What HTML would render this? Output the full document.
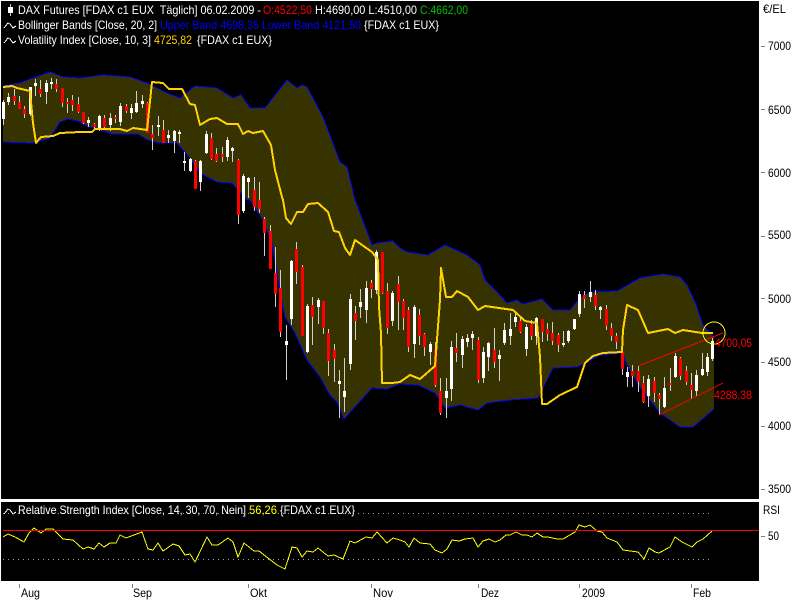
<!DOCTYPE html>
<html><head><meta charset="utf-8"><title>DAX Futures</title>
<style>
html,body{margin:0;padding:0;background:#fff;width:800px;height:600px;overflow:hidden}
svg{display:block;position:absolute;left:0;top:0}
text{font-family:"Liberation Sans",sans-serif;font-size:12px;white-space:pre}
</style></head><body>
<svg width="800" height="600" viewBox="0 0 800 600" xmlns="http://www.w3.org/2000/svg">
<rect width="800" height="600" fill="#fff"/>
<rect x="1" y="1" width="758" height="498" fill="#000"/>
<rect x="1" y="502" width="758" height="79" fill="#000"/>

<!-- band fill -->
<path fill="#373300" shape-rendering="crispEdges" d="M3,86 20,83 33,78 50,72 63,77 80,78 103,75 130,77 147,83 167,93 180,98 195,86 217,88 233,98 241,95 250,108 265,108 287,80 297,88 302,85 307,87 323,117 340,162 347,167 355,200 372,245 377,243 393,241 400,248 407,252 428,255 445,245 467,255 480,265 485,280 495,290 507,303 517,300 523,304 542,299 553,310 570,310 580,298 590,292 617,291 640,278 663,274 680,277 687,285 695,302 703,325 714,337 714,409 693,427 680,427 660,413 640,387 627,365 622,353 600,355 587,362 577,367 553,368 547,380 538,398 510,400 487,403 478,410 460,405 445,408 435,393 418,385 400,384 387,389 372,388 344,419 337,402 330,395 320,377 307,360 295,333 285,317 277,273 272,243 263,220 250,200 247,200 232,183 217,182 200,173 190,158 177,143 160,143 148,140 138,134 113,134 100,130 87,126 78,121 68,119 60,122 50,138 33,143 3,142Z"/>
<!-- bands -->
<g fill="none" stroke="#0000ff" stroke-width="1" shape-rendering="crispEdges">
<polyline points="3,86 20,83 33,78 50,72 63,77 80,78 103,75 130,77 147,83 167,93 180,98 195,86 217,88 233,98 241,95 250,108 265,108 287,80 297,88 302,85 307,87 323,117 340,162 347,167 355,200 372,245 377,243 393,241 400,248 407,252 428,255 445,245 467,255 480,265 485,280 495,290 507,303 517,300 523,304 542,299 553,310 570,310 580,298 590,292 617,291 640,278 663,274 680,277 687,285 695,302 703,325 714,337"/>
<polyline points="3,142 33,143 50,138 60,122 68,119 78,121 87,126 100,130 113,134 138,134 148,140 160,143 177,143 190,158 200,173 217,182 232,183 247,200 250,200 263,220 272,243 277,273 285,317 295,333 307,360 320,377 330,395 337,402 344,419 372,388 387,389 400,384 418,385 435,393 445,408 460,405 478,410 487,403 510,400 538,398 547,380 553,368 577,367 587,362 600,355 622,353 627,365 640,387 660,413 680,427 693,427 714,409"/>
</g>

<!-- wicks -->
<path fill="none" stroke="#d0d0d0" stroke-width="1" shape-rendering="crispEdges" d="M3.5,100V125M8.5,93V105M14.5,89V105M19.5,96V109M24.5,106V118M30.5,87V116M35.5,79V96M40.5,80V97M46.5,80V104M51.5,78V89M56.5,79V92M62.5,88V107M67.5,98V113M72.5,95V111M78.5,97V113M83.5,112V124M88.5,117V127M94.5,123V130M99.5,115V131M104.5,115V128M110.5,113V131M115.5,115V123M120.5,103V126M126.5,104V113M131.5,104V119M136.5,91V113M142.5,95V108M147.5,102V133M152.5,125V150M158.5,116V136M163.5,120V143M168.5,130V143M174.5,130V153M179.5,130V143M184.5,152V171M190.5,158V172M195.5,160V189M200.5,160V191M206.5,131V154M211.5,133V160M216.5,148V162M222.5,147V162M227.5,137V161M232.5,147V162M238.5,159V224M243.5,174V213M248.5,177V198M254.5,177V211M259.5,182V213M264.5,217V256M270.5,225V269M275.5,247V307M280.5,270V337M286.5,325V380M291.5,260V325M296.5,242V284M302.5,265V336M307.5,304V353M312.5,297V345M318.5,298V324M323.5,301V334M328.5,329V376M334.5,344V382M339.5,370V418M344.5,358V412M350.5,294V370M355.5,306V340M360.5,289V318M366.5,281V323M371.5,280V298M376.5,250V294M382.5,252V294M387.5,283V334M392.5,291V326M398.5,276V330M403.5,299V330M408.5,307V352M414.5,305V358M419.5,309V345M424.5,333V356M430.5,342V365M435.5,342V387M440.5,378V415M446.5,378V418M451.5,341V401M456.5,333V362M462.5,336V368M467.5,334V347M472.5,331V350M478.5,337V383M483.5,347V383M488.5,342V371M494.5,328V368M499.5,350V381M504.5,323V345M510.5,313V345M515.5,313V327M520.5,317V333M526.5,324V356M531.5,320V340M536.5,317V345M542.5,319V342M547.5,323V341M552.5,322V345M558.5,333V352M563.5,331V347M568.5,330V343M574.5,319V330M579.5,291V317M584.5,291V308M590.5,281V302M595.5,290V310M600.5,306V319M606.5,305V330M611.5,323V341M616.5,333V349M622.5,337V375M627.5,367V387M632.5,365V387M638.5,366V392M643.5,376V403M648.5,375V407M654.5,377V402M659.5,393V415M664.5,377V408M670.5,368V391M675.5,353V378M680.5,357V380M686.5,366V385M691.5,373V399M696.5,370V396M702.5,353V376M707.5,353V376M712.5,338V361"/>
<!-- white bodies -->
<path fill="none" stroke="#fff" stroke-width="3" shape-rendering="crispEdges" d="M3.5,102V119M8.5,97V102M30.5,87V114M35.5,83V86M46.5,83V92M51.5,82V84M88.5,120V123M99.5,116V128M110.5,118V125M120.5,106V122M131.5,108V113M136.5,103V112M142.5,101V104M158.5,125V127M168.5,135V138M174.5,131V141M179.5,132V134M184.5,161V163M190.5,159V171M200.5,161V182M206.5,134V153M227.5,140V157M232.5,148V151M243.5,176V211M248.5,178V182M286.5,341V345M291.5,261V319M307.5,306V352M318.5,300V307M339.5,381V384M344.5,391V397M350.5,299V364M360.5,302V307M366.5,288V310M376.5,252V290M392.5,293V321M414.5,307V344M430.5,344V352M446.5,391V398M451.5,347V389M462.5,339V355M467.5,338V342M472.5,334V338M483.5,352V378M488.5,343V357M499.5,355V359M504.5,330V343M510.5,329V336M515.5,317V322M526.5,327V349M536.5,318V336M563.5,343V345M568.5,331V341M574.5,319V329M579.5,294V314M590.5,292V297M600.5,307V310M627.5,372V377M648.5,379V396M664.5,388V407M675.5,356V377M696.5,375V391M702.5,369V375M707.5,357V372M712.5,341V359"/>
<!-- red bodies -->
<path fill="none" stroke="#ff0000" stroke-width="3" shape-rendering="crispEdges" d="M14.5,96V101M19.5,102V109M24.5,109V114M40.5,89V94M56.5,84V89M62.5,88V103M67.5,102V104M72.5,100V105M78.5,104V112M83.5,112V123M94.5,124V127M104.5,118V127M115.5,117V119M126.5,106V111M147.5,103V133M152.5,134V138M163.5,130V143M195.5,161V189M211.5,138V159M216.5,154V161M222.5,154V157M238.5,160V215M254.5,190V207M259.5,200V209M264.5,219V233M270.5,231V269M275.5,273V294M280.5,288V332M296.5,249V272M302.5,267V336M312.5,305V317M323.5,301V328M328.5,333V361M334.5,350V359M355.5,313V321M371.5,283V289M382.5,252V293M387.5,291V328M398.5,284V302M403.5,301V318M408.5,310V347M419.5,315V336M424.5,334V347M435.5,349V385M440.5,391V413M456.5,348V353M478.5,340V380M494.5,350V362M520.5,321V332M531.5,324V336M542.5,319V332M547.5,329V334M552.5,333V341M558.5,335V345M584.5,295V299M595.5,295V306M606.5,309V326M611.5,328V336M616.5,336V342M622.5,352V369M632.5,371V376M638.5,371V382M643.5,383V402M654.5,381V393M659.5,395V399M670.5,383V385M680.5,358V376M686.5,371V382M691.5,385V390"/>

<!-- volatility line -->
<polyline fill="none" stroke="#ffd200" stroke-width="2" stroke-linejoin="round" shape-rendering="crispEdges" points="3,87 12,86 17,88 30,91 33,123 36,143 41,137 53,136 60,133 80,132 92,132 95,129 120,129 127,131 133,128 147,130 152,82 163,83 169,89 182,89 190,104 195,105 200,125 210,119 217,118 227,124 238,124 243,134 248,131 253,133 263,131 271,145 275,170 282,197 283,200 286,218 291,224 297,212 303,212 308,204 318,203 328,212 334,231 339,232 345,248 350,255 355,240 372,252 378,260 379,307 381,333 382,383 392,383 400,382 410,375 420,379 435,366 440,300 441,268 446,297 452,297 457,291 468,297 478,310 485,306 513,310 525,321 537,323 540,357 542,404 547,404 560,395 577,387 585,363 593,356 603,353 622,352 623,330 627,305 638,310 648,333 668,329 675,333 683,330 702,333 713,333"/>

<!-- channel -->
<g fill="none" stroke="#ff0000" stroke-width="1" shape-rendering="crispEdges">
<line x1="638" y1="366" x2="723" y2="333"/>
<line x1="659" y1="415" x2="723" y2="383"/>
</g>
<circle cx="714" cy="333" r="11" fill="none" stroke="#ffff00" stroke-width="1" shape-rendering="crispEdges"/>
<text x="715" y="347" fill="#ff0000" textLength="37" lengthAdjust="spacingAndGlyphs">4700,05</text>
<text x="714" y="399" fill="#ff0000" textLength="38" lengthAdjust="spacingAndGlyphs">4288,38</text>

<!-- legend icons -->
<path d="M10.5,4V16" stroke="#ccc" stroke-width="1" shape-rendering="crispEdges"/>
<rect x="8" y="7" width="5" height="6" fill="#fff"/>
<g fill="none" stroke="#fff" stroke-width="1" shape-rendering="crispEdges">
<path d="M4,28 8,23 10,24 13,28 16,26"/>
<path d="M4,43 8,38 10,39 13,43 16,41"/>
<path d="M4,514 8,509 10,510 13,514 16,512"/>
</g>

<!-- legend text -->
<text x="18" y="14" fill="#fff" textLength="243" lengthAdjust="spacingAndGlyphs">DAX Futures [FDAX c1 EUX  Täglich] 06.02.2009 -</text>
<text x="263" y="14" fill="#ff0000" textLength="49" lengthAdjust="spacingAndGlyphs">O:4522,50</text>
<text x="315" y="14" fill="#fff" textLength="102" lengthAdjust="spacingAndGlyphs">H:4690,00 L:4510,00</text>
<text x="420" y="14" fill="#00c000" textLength="48" lengthAdjust="spacingAndGlyphs">C:4662,00</text>
<text x="18" y="29" fill="#fff" textLength="139" lengthAdjust="spacingAndGlyphs">Bollinger Bands [Close, 20, 2]</text>
<text x="160" y="29" fill="#0000ff" textLength="201" lengthAdjust="spacingAndGlyphs">Upper Band 4698,35 Lower Band 4121,50</text>
<text x="364" y="29" fill="#fff" textLength="75" lengthAdjust="spacingAndGlyphs">{FDAX c1 EUX}</text>
<text x="18" y="44" fill="#fff" textLength="133" lengthAdjust="spacingAndGlyphs">Volatility Index [Close, 10, 3]</text>
<text x="154" y="44" fill="#ffd200" textLength="38" lengthAdjust="spacingAndGlyphs">4725,82</text>
<text x="197" y="44" fill="#fff" textLength="75" lengthAdjust="spacingAndGlyphs">{FDAX c1 EUX}</text>

<!-- right axis -->
<g stroke="#808080" stroke-width="1" shape-rendering="crispEdges">
<path d="M761,46.5h4M761,109.5h4M761,172.5h4M761,236.5h4M761,298.5h4M761,362.5h4M761,426.5h4M761,489.5h4M761,536.5h4"/>
</g>
<g fill="#000">
<text x="763" y="13" textLength="23" lengthAdjust="spacingAndGlyphs">€/EL</text>
<text x="768" y="50" textLength="23" lengthAdjust="spacingAndGlyphs">7000</text>
<text x="768" y="114" textLength="23" lengthAdjust="spacingAndGlyphs">6500</text>
<text x="768" y="177" textLength="23" lengthAdjust="spacingAndGlyphs">6000</text>
<text x="768" y="239" textLength="23" lengthAdjust="spacingAndGlyphs">5500</text>
<text x="768" y="303" textLength="23" lengthAdjust="spacingAndGlyphs">5000</text>
<text x="768" y="366" textLength="23" lengthAdjust="spacingAndGlyphs">4500</text>
<text x="768" y="430" textLength="23" lengthAdjust="spacingAndGlyphs">4000</text>
<text x="768" y="493" textLength="23" lengthAdjust="spacingAndGlyphs">3500</text>
<text x="763" y="514" textLength="17" lengthAdjust="spacingAndGlyphs">RSI</text>
<text x="768" y="540" textLength="11" lengthAdjust="spacingAndGlyphs">50</text>
</g>

<!-- RSI panel -->
<g fill="none" stroke="#a0a0a0" stroke-width="1" stroke-dasharray="1 4" shape-rendering="crispEdges">
<line x1="3" y1="513.5" x2="712" y2="513.5"/>
<line x1="3" y1="559.5" x2="712" y2="559.5"/>
</g>
<text x="18" y="514" fill="#fff" textLength="228" lengthAdjust="spacingAndGlyphs">Relative Strength Index [Close, 14, 30, 70, Nein]</text>
<text x="249" y="514" fill="#ffff00" textLength="28" lengthAdjust="spacingAndGlyphs">56,26</text>
<text x="280" y="514" fill="#fff" textLength="75" lengthAdjust="spacingAndGlyphs">{FDAX c1 EUX}</text>
<polyline fill="none" stroke="#ffff00" stroke-width="1" shape-rendering="crispEdges" points="3,537 8,534 15,537 24,542 29,533 34,528 41,533 46,529 53,529 63,539 73,540 83,549 88,547 94,549 99,543 104,547 110,543 116,543 120,535 126,538 142,532 148,549 153,550 158,543 163,551 173,544 179,546 185,555 190,554 195,562 207,537 212,545 218,545 228,538 233,542 238,557 244,543 254,551 259,551 277,565 285,569 292,547 297,548 302,557 307,551 313,552 318,548 328,556 334,555 343,559 350,541 355,543 366,537 372,538 377,532 387,543 393,538 400,540 405,542 409,547 414,538 420,543 430,544 435,550 442,553 447,549 452,540 459,541 465,539 473,538 478,547 483,541 489,539 495,542 500,540 506,535 510,535 516,532 522,535 527,535 532,537 537,533 543,537 548,537 557,539 563,539 575,532 579,525 585,527 590,525 597,531 602,532 607,538 617,542 623,550 638,552 644,559 649,548 655,552 659,553 670,547 675,537 682,542 692,547 697,542 703,539 712,531"/>
<rect x="3" y="530" width="756" height="1" fill="#ff0000"/>

<!-- time axis -->
<path d="M19.5,584v4M132.5,584v4M248.5,584v4M371.5,584v4M478.5,584v4M579.5,584v4M691.5,584v4" stroke="#808080" stroke-width="1" shape-rendering="crispEdges"/>
<g fill="#000">
<text x="21" y="597" textLength="19" lengthAdjust="spacingAndGlyphs">Aug</text>
<text x="133" y="597" textLength="19" lengthAdjust="spacingAndGlyphs">Sep</text>
<text x="250" y="597" textLength="17" lengthAdjust="spacingAndGlyphs">Okt</text>
<text x="373" y="597" textLength="20" lengthAdjust="spacingAndGlyphs">Nov</text>
<text x="481" y="597" textLength="18" lengthAdjust="spacingAndGlyphs">Dez</text>
<text x="582" y="597" textLength="23" lengthAdjust="spacingAndGlyphs">2009</text>
<text x="693" y="597" textLength="18" lengthAdjust="spacingAndGlyphs">Feb</text>
</g>
</svg>
</body></html>
